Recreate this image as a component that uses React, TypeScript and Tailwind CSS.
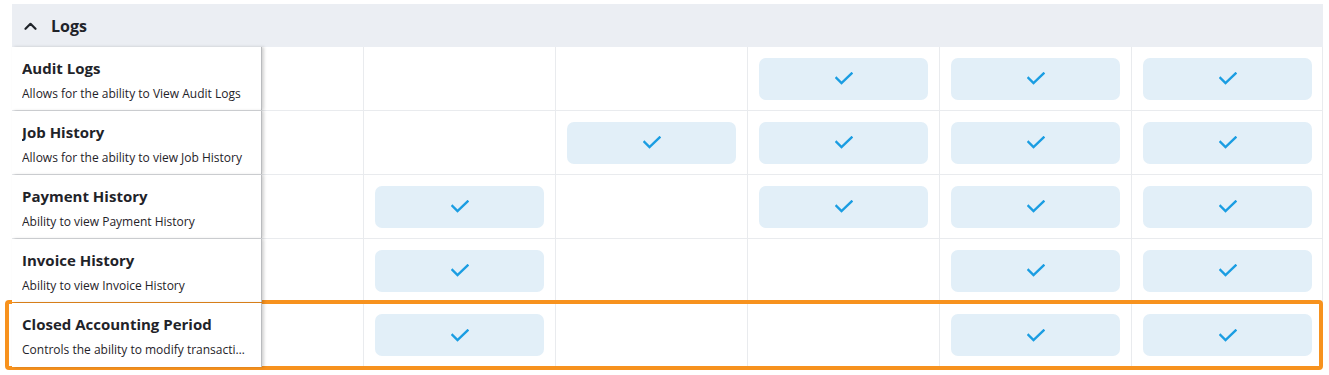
import React from "react";

const rows: { title: string; desc: string; checks: boolean[] }[] = [
  { title: "Audit Logs", desc: "Allows for the ability to View Audit Logs", checks: [false, false, false, true, true, true] },
  { title: "Job History", desc: "Allows for the ability to view Job History", checks: [false, false, true, true, true, true] },
  { title: "Payment History", desc: "Ability to view Payment History", checks: [false, true, false, true, true, true] },
  { title: "Invoice History", desc: "Ability to view Invoice History", checks: [false, true, false, false, true, true] },
  { title: "Closed Accounting Period", desc: "Controls the ability to modify transactions in a closed accounting period", checks: [false, true, false, false, true, true] },
];

function Check() {
  return (
    <svg width="18" height="13" viewBox="0 0 18 13" fill="none">
      <polyline points="1.5,6 6.5,11 16.5,1.5" stroke="#1a9de2" strokeWidth="2.4" strokeLinecap="square" strokeLinejoin="miter" />
    </svg>
  );
}

function Chevron() {
  return (
    <svg width="13" height="8" viewBox="0 0 13 8" fill="none">
      <polyline points="1.5,6.8 6.5,1.8 11.5,6.8" stroke="#1f2329" strokeWidth="2.2" strokeLinecap="round" strokeLinejoin="round" />
    </svg>
  );
}

export default function App() {
  return (
    <div className="bg-white w-[1329px] h-[375px] overflow-hidden pt-1 px-3" style={{ fontFamily: "'Open Sans', 'Noto Sans', sans-serif" }}>
      <div className="relative w-[1311px]">
        <div className="h-[43px] bg-[#ebeef3] flex items-center pl-[12px] gap-[14px]">
          <Chevron />
          <span className="text-[16px] font-bold text-[#1f2329]">Logs</span>
        </div>
        <div className="border-r border-[#e9ebee]">
          {rows.map((r, i) => (
            <div key={r.title} className={`grid grid-cols-[250px_101px_repeat(5,192px)] h-[64px] ${i < rows.length - 1 ? "border-b border-[#e9ebee]" : ""}`}>
              <div className="relative z-10 bg-white border-r border-[#b9bbbe] shadow-[2px_0_3px_rgba(0,0,0,0.18)] pl-[10px] pr-[16px] pt-[11px] flex flex-col min-w-0">
                <div className="text-[15px] leading-[20px] font-bold text-[#1f2329] truncate">{r.title}</div>
                <div className="mt-[8px] text-[12px] leading-[16px] text-[#1f2329] truncate">{r.desc}</div>
              </div>
              {r.checks.map((c, j) => (
                <div key={j} className={`${j === 0 ? "" : "border-l border-[#e9ebee]"} flex items-center justify-center px-[11px]`}>
                  {c && j > 0 && (
                    <div className="w-full h-[42px] rounded-[7px] bg-[#e2eff8] flex items-center justify-center">
                      <Check />
                    </div>
                  )}
                </div>
              ))}
            </div>
          ))}
        </div>
        <div className="absolute left-[-7px] top-[296px] w-[1318px] h-[70px] border-[4px] border-[#f7921e] rounded-[4px] pointer-events-none" />
      </div>
    </div>
  );
}
